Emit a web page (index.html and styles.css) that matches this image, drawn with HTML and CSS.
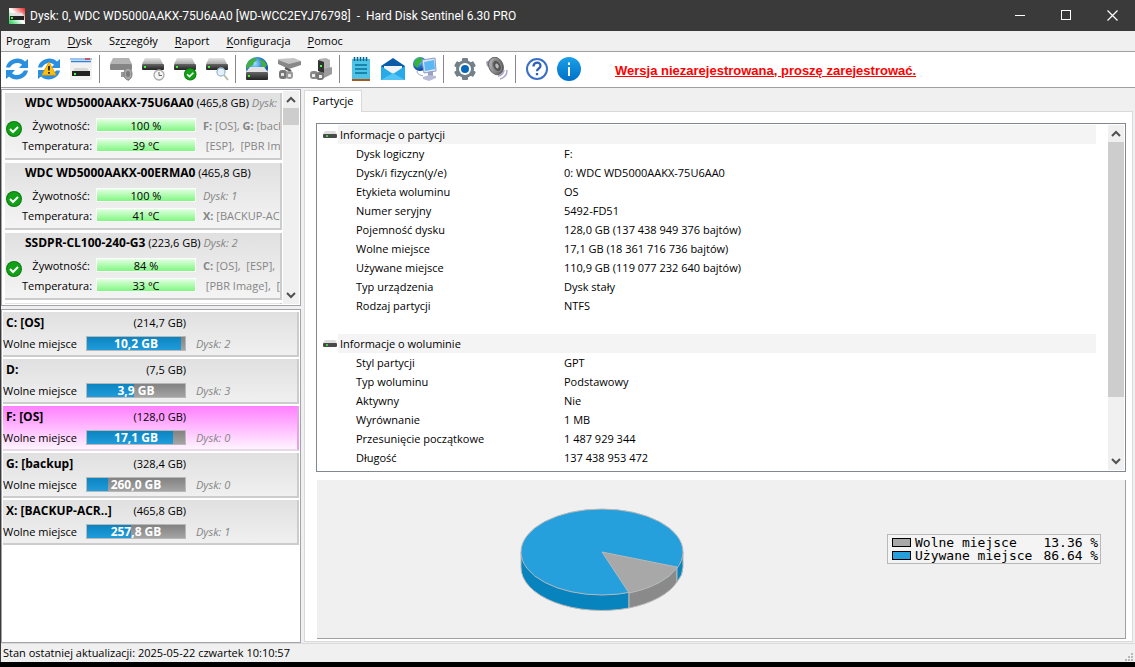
FILE: index.html
```
<!DOCTYPE html>
<html lang="pl">
<head>
<meta charset="utf-8">
<title>Hard Disk Sentinel 6.30 PRO</title>
<link rel="stylesheet" href="styles.css">
</head>
<body>
<svg class="defs" width="0" height="0" aria-hidden="true">
  <defs>
    <linearGradient id="gDrive" x1="0" y1="0" x2="0" y2="1"><stop offset="0" stop-color="#e4e4e4"/><stop offset="1" stop-color="#a8a8a8"/></linearGradient>
    <linearGradient id="gDark" x1="0" y1="0" x2="0" y2="1"><stop offset="0" stop-color="#666"/><stop offset="1" stop-color="#222"/></linearGradient>
    <linearGradient id="gInfo" x1="0" y1="0" x2="0" y2="1"><stop offset="0" stop-color="#1aa0e8"/><stop offset="1" stop-color="#0070c8"/></linearGradient>
    <radialGradient id="gGlobe" cx=".4" cy=".3" r=".7"><stop offset="0" stop-color="#9fe0ff"/><stop offset=".5" stop-color="#2a80d8"/><stop offset="1" stop-color="#0c3c90"/></radialGradient>
    <linearGradient id="gSpk" x1="0" y1="0" x2="1" y2="1"><stop offset="0" stop-color="#c8c8cc"/><stop offset="1" stop-color="#444"/></linearGradient>
    <linearGradient id="gApp" x1="0" y1="1" x2="1" y2="0"><stop offset="0" stop-color="#1fd050"/><stop offset=".5" stop-color="#fff"/><stop offset="1" stop-color="#e82020"/></linearGradient>
    <g id="refresh" fill="#2b8fe0">
      <path d="M1 10.500C2 5 7 1.500 12.500 1.500c3 0 5.500 1 7.500 3L23 2v9h-9l3-3.200c-1.200-1.200-2.800-1.800-4.500-1.800-3.500 0-6.200 1.900-7.500 4.500z"/>
      <path d="M23 13.500C22 19 17 22.500 11.500 22.500c-3 0-5.500-1-7.500-3L1 22v-9h9l-3 3.200c1.200 1.200 2.800 1.800 4.500 1.800 3.500 0 6.200-1.900 7.500-4.500z"/>
    </g>
    <g id="drive">
      <path d="M4 1h15l3 6H1z" fill="url(#gDrive)"/>
      <rect x="1" y="7" width="22" height="6" rx="1" fill="url(#gDark)"/>
      <rect x="3" y="9" width="2" height="2" fill="#3f3"/>
    </g>
    <g id="minidrive">
      <path d="M2 0h10l2 3H0z" fill="#ddd"/><rect y="3" width="14" height="4" rx="1" fill="#4a4a4a"/><rect x="3" y="4" width="2" height="2" fill="#4c4"/>
    </g>
    <g id="ok">
      <circle cx="8" cy="8" r="8" fill="#0a7a0a"/><circle cx="8" cy="8" r="7" fill="#12a018"/>
      <path d="M4 8l3 3 5-5" fill="none" stroke="#fff" stroke-width="2"/>
    </g>
    <g id="chevUp"><path d="M1 6l4-4 4 4" fill="none" stroke="#505050" stroke-width="2"/></g>
    <g id="chevDown"><path d="M1 1l4 4 4-4" fill="none" stroke="#505050" stroke-width="2"/></g>
  </defs>
</svg>

<div class="window">
  <header class="titlebar">
    <svg class="appicon" width="16" height="16" viewBox="0 0 16 16"><rect width="16" height="16" fill="url(#gApp)"/><path d="M2 5h11l2 3H1z" fill="#e0e0e0"/><rect x="1" y="8" width="14" height="4" fill="#222"/><rect x="2" y="9" width="2" height="2" fill="#3f3"/></svg>
    <h1 class="title">Dysk: 0, WDC WD5000AAKX-75U6AA0 [WD-WCC2EYJ76798]&nbsp; -&nbsp; Hard Disk Sentinel 6.30 PRO</h1>
    <div class="winbuttons">
      <button type="button" aria-label="Minimalizuj"><svg width="11" height="11"><path d="M0 5.500h10" stroke="#fff"/></svg></button>
      <button type="button" aria-label="Maksymalizuj"><svg width="11" height="11"><rect x=".5" y=".5" width="9" height="9" fill="none" stroke="#fff"/></svg></button>
      <button type="button" aria-label="Zamknij"><svg width="11" height="11"><path d="M.5.500l10 10M10.500.500l-10 10" stroke="#fff" stroke-width="1.200"/></svg></button>
    </div>
  </header>

  <nav class="menu">
    <button type="button">Pro<u>g</u>ram</button>
    <button type="button"><u>D</u>ysk</button>
    <button type="button">Sz<u>c</u>zegóły</button>
    <button type="button"><u>R</u>aport</button>
    <button type="button"><u>K</u>onfiguracja</button>
    <button type="button"><u>P</u>omoc</button>
  </nav>

  <div class="toolbar">
    <button type="button" aria-label="Odśwież"><svg width="24" height="24"><use href="#refresh"/></svg></button>
    <button type="button" aria-label="Odśwież wszystko"><svg width="24" height="24"><use href="#refresh"/><path d="M12 5l7 13H5z" fill="#fdc010" stroke="#e8a000" stroke-linejoin="round"/><path d="M12 9v4.500M12 15v1.800" stroke="#222" stroke-width="1.800"/></svg></button>
    <button type="button" aria-label="Okno dysku"><svg width="24" height="24"><rect x="1" y="1" width="22" height="22" fill="#f1f1f1"/><path d="M1 2h22" stroke="#7fb4e8" stroke-width="1.500"/><path d="M16 2h5" stroke="#e03030" stroke-width="1.500"/><path d="M2 4.500h20" stroke="#2f86dc" stroke-width="1.500"/><path d="M6 11h12l3 4H3z" fill="#d8d8d8"/><rect x="3" y="14" width="18" height="5" fill="#222"/><rect x="5" y="16" width="2" height="2" fill="#4f4"/></svg></button>
    <span class="sep"></span>
    <button type="button" aria-label="Test dźwięku"><svg width="24" height="24"><path d="M4 1h16l3 6H1z" fill="#b4b4b4"/><rect x="1" y="7" width="22" height="6" rx="1" fill="#858585"/><path d="M12 15h3l5-4v13l-5-4h-3z" fill="#9a9a9a"/><ellipse cx="19" cy="17" rx="4" ry="6" fill="#a6a6a6" stroke="#808080"/><ellipse cx="19" cy="17" rx="2" ry="3" fill="#7b7b7b"/></svg></button>
    <button type="button" aria-label="Harmonogram"><svg width="24" height="24"><use href="#drive"/><circle cx="18" cy="18" r="5" fill="#f4f4f4" stroke="#aaa" stroke-width="1.300"/><path d="M18 15v3.500h3" fill="none" stroke="#666"/></svg></button>
    <button type="button" aria-label="Test dysku"><svg width="24" height="24"><use href="#drive"/><use href="#ok" transform="translate(11 11) scale(.78)"/></svg></button>
    <button type="button" aria-label="Przeszukaj dysk"><svg width="24" height="24"><use href="#drive"/><circle cx="16" cy="15" r="4" fill="#e2f2fd" stroke="#9ab8d0" stroke-width="1.300"/><path d="M19 18l4 5" stroke="#bba" stroke-width="2"/></svg></button>
    <span class="sep"></span>
    <button type="button" aria-label="Dysk sieciowy"><svg width="24" height="24"><circle cx="12" cy="11" r="11" fill="url(#gGlobe)"/><path d="M3 5C5 2 8 1 11 1l1 2-3 2-1 3-4 2-2 2-1-3zM14 2l5 2 3 4-2 3-3-1-1-4z" fill="#42b040"/><path d="M5 10h14l4 5H1z" fill="#e2e2e2"/><rect x="1" y="15" width="22" height="8" rx="1" fill="url(#gDark)"/><rect x="3" y="18" width="2" height="2" fill="#3f3"/></svg></button>
    <button type="button" aria-label="Klucz sprzętowy"><svg width="24" height="24"><path d="M1 2l16-1 7 3-12 5-11-3z" fill="#c4c4c4"/><path d="M1 3l11 4 12-3v4l-12 4-11-5z" fill="#888"/><path d="M8 11l6 3" stroke="#555" stroke-width="2"/><rect x="2" y="13" width="8" height="9" rx="3" fill="#777"/><rect x="9" y="14" width="7" height="8" rx="3" fill="#999"/><path d="M4 16h3v3H4zM11 17h3v3h-3z" fill="#e6e6e6"/></svg></button>
    <button type="button" aria-label="Stacja dysków"><svg width="24" height="24"><path d="M10 2l7-1 4 2v13l-5 3-6-3z" fill="#b2b2b2"/><path d="M9 3l6 2v11l-6-2z" fill="#333"/><rect x="11" y="8" width="2" height="2" fill="#4f4"/><path d="M15 12l8-2v7l-8 4z" fill="#9b9b9b"/><rect x="1" y="14" width="8" height="8" rx="3" fill="#888"/><rect x="7" y="15" width="8" height="8" rx="3" fill="#777"/><path d="M3 17h3v3H3zM10 18h3v3h-3z" fill="#eee"/></svg></button>
    <span class="sep"></span>
    <button type="button" aria-label="Raport"><svg width="24" height="24"><rect x="3" y="2" width="18" height="20" fill="#4dc3e8"/><rect x="3" y="22" width="18" height="2" fill="#b05418"/><path d="M6 8h12M6 12h12M6 16h12" stroke="#087098" stroke-width="1.500"/><path d="M5.500 0v4M8.500 0v4M11.500 0v4M14.500 0v4M17.500 0v4" stroke="#08658c" stroke-width="1.600"/></svg></button>
    <button type="button" aria-label="Wyślij raport"><svg width="24" height="24"><path d="M0 9l12-8 12 8v2H0z" fill="#0a5ba8"/><path d="M3 9h18v7l-9 4-9-4z" fill="#f0f4f8"/><path d="M0 9l12 8 12-8v14H0z" fill="#29aae8"/><path d="M0 23l12-7 12 7z" fill="#50c4f4"/></svg></button>
    <button type="button" aria-label="Sieć"><svg width="24" height="24"><circle cx="7" cy="7" r="7" fill="url(#gGlobe)"/><path d="M2 3l5-3 3 3-4 4-1 4-4-3z" fill="#36b534"/><path d="M9 3l13-2 1 13-12 2z" fill="#dde6f4" stroke="#8a9cc8"/><path d="M11 5l10-2 1 9-10 2z" fill="#5bb8f4"/><path d="M15 15l5-1v5l-5 1z" fill="#9aa0c0"/><path d="M10 20l6-2 7 1v2l-7 3-6-2z" fill="#b8bcd6"/><path d="M4 14c0 3 3 4 6 5" fill="none" stroke="#9aa0c8"/></svg></button>
    <span class="sep"></span>
    <button type="button" aria-label="Ustawienia"><svg width="24" height="24"><g fill="#73808a"><rect x="9" y="1" width="6" height="22" rx="1"/><rect x="9" y="1" width="6" height="22" rx="1" transform="rotate(60 12 12)"/><rect x="9" y="1" width="6" height="22" rx="1" transform="rotate(120 12 12)"/><circle cx="12" cy="12" r="9"/></g><circle cx="12" cy="12" r="6" fill="#fff"/><circle cx="12" cy="12" r="4" fill="#0868b8"/></svg></button>
    <button type="button" aria-label="Dźwięk"><svg width="24" height="24"><path d="M1 5l7-4 8 15-7-2-7-5z" fill="#9c9aaa"/><ellipse cx="11" cy="9" rx="7" ry="9" fill="url(#gSpk)" stroke="#666" transform="rotate(-25 11 9)"/><ellipse cx="12" cy="9" rx="4" ry="6" fill="#555" stroke="#888" transform="rotate(-25 12 9)"/><ellipse cx="12" cy="9" rx="1.500" ry="2.500" fill="#bbb" transform="rotate(-25 12 9)"/><path d="M13 19c3 0 6-3 6-6M15 22c4-1 7-4 7-9" fill="none" stroke="#a9a6c9" stroke-width="1.500"/></svg></button>
    <span class="sep"></span>
    <button type="button" aria-label="Pomoc"><svg width="24" height="24"><circle cx="12" cy="12" r="10" fill="#fff" stroke="#3a6fc8" stroke-width="2"/><path d="M8.500 9.500c0-5 7-5 7-.8 0 2.800-3.500 2.800-3.500 5.600M12 16v2.300" fill="none" stroke="#3060b8" stroke-width="2.300"/></svg></button>
    <button type="button" aria-label="Informacje"><svg width="24" height="24"><circle cx="12" cy="12" r="12" fill="url(#gInfo)"/><path d="M12 10v9M12 5.500v2.500" stroke="#fff" stroke-width="2"/></svg></button>
    <a class="unreg" href="#">Wersja niezarejestrowana, proszę zarejestrować.</a>
  </div>

  <main class="main">
    <aside class="side">
      <section class="box disks">
        <ul class="disklist">
          <li class="disk">
            <svg class="state" width="16" height="16"><use href="#ok"/></svg>
            <div class="dname"><b>WDC WD5000AAKX-75U6AA0</b> (465,8 GB) <i>Dysk: 0</i></div>
            <span class="lbl">Żywotność:</span><span class="meter">100 %</span><span class="vols"><b>F:</b> [OS], <b>G:</b> [backup]</span>
            <span class="lbl">Temperatura:</span><span class="meter">39 °C</span><span class="vols">&nbsp;[ESP],&nbsp; [PBR Image]</span>
          </li>
          <li class="disk">
            <svg class="state" width="16" height="16"><use href="#ok"/></svg>
            <div class="dname"><b>WDC WD5000AAKX-00ERMA0</b> (465,8 GB)</div>
            <span class="lbl">Żywotność:</span><span class="meter">100 %</span><span class="vols"><i>Dysk: 1</i></span>
            <span class="lbl">Temperatura:</span><span class="meter">41 °C</span><span class="vols"><b>X:</b> [BACKUP-ACR]</span>
          </li>
          <li class="disk">
            <svg class="state" width="16" height="16"><use href="#ok"/></svg>
            <div class="dname"><b>SSDPR-CL100-240-G3</b> (223,6 GB) <i>Dysk: 2</i></div>
            <span class="lbl">Żywotność:</span><span class="meter">84 %</span><span class="vols"><b>C:</b> [OS],&nbsp; [ESP],</span>
            <span class="lbl">Temperatura:</span><span class="meter">33 °C</span><span class="vols">&nbsp;[PBR Image],&nbsp; [</span>
          </li>
          <li class="disk"></li>
        </ul>
        <div class="scroll">
          <svg width="10" height="7"><use href="#chevUp"/></svg>
          <span class="track"><span class="thumb small"></span></span>
          <svg width="10" height="7"><use href="#chevDown"/></svg>
        </div>
      </section>
      <section class="box parts">
        <ul class="partlist">
          <li class="part"><b>C: [OS]</b><span class="size">(214,7 GB)</span><span class="free">Wolne miejsce</span><span class="usage"><span class="fill" style="width:96%"></span><b>10,2 GB</b></span><i>Dysk: 2</i></li>
          <li class="part"><b>D:</b><span class="size">(7,5 GB)</span><span class="free">Wolne miejsce</span><span class="usage"><span class="fill" style="width:48%"></span><b>3,9 GB</b></span><i>Dysk: 3</i></li>
          <li class="part selected"><b>F: [OS]</b><span class="size">(128,0 GB)</span><span class="free">Wolne miejsce</span><span class="usage"><span class="fill" style="width:88%"></span><b>17,1 GB</b></span><i>Dysk: 0</i></li>
          <li class="part"><b>G: [backup]</b><span class="size">(328,4 GB)</span><span class="free">Wolne miejsce</span><span class="usage"><span class="fill" style="width:21%"></span><b>260,0 GB</b></span><i>Dysk: 0</i></li>
          <li class="part"><b>X: [BACKUP-ACR..]</b><span class="size">(465,8 GB)</span><span class="free">Wolne miejsce</span><span class="usage"><span class="fill" style="width:45%"></span><b>257,8 GB</b></span><i>Dysk: 1</i></li>
        </ul>
      </section>
    </aside>

    <section class="detail">
      <div class="tabs"><button type="button" class="tab">Partycje</button><span class="tabline"></span></div>
      <div class="page">
        <div class="infobox">
          <div class="infoscroll">
          <table class="info">
            <colgroup><col class="c1"><col></colgroup>
            <tbody>
            <tr><th colspan="2"><span><svg width="14" height="8"><use href="#minidrive"/></svg><em>Informacje o partycji</em></span></th></tr>
            <tr><td>Dysk logiczny</td><td>F:</td></tr>
            <tr><td>Dysk/i fizyczn(y/e)</td><td>0: WDC WD5000AAKX-75U6AA0</td></tr>
            <tr><td>Etykieta woluminu</td><td>OS</td></tr>
            <tr><td>Numer seryjny</td><td>5492-FD51</td></tr>
            <tr><td>Pojemność dysku</td><td>128,0 GB (137 438 949 376 bajtów)</td></tr>
            <tr><td>Wolne miejsce</td><td>17,1 GB (18 361 716 736 bajtów)</td></tr>
            <tr><td>Używane miejsce</td><td>110,9 GB (119 077 232 640 bajtów)</td></tr>
            <tr><td>Typ urządzenia</td><td>Dysk stały</td></tr>
            <tr><td>Rodzaj partycji</td><td>NTFS</td></tr>
            <tr><td></td><td></td></tr>
            <tr><th colspan="2"><span><svg width="14" height="8"><use href="#minidrive"/></svg><em>Informacje o woluminie</em></span></th></tr>
            <tr><td>Styl partycji</td><td>GPT</td></tr>
            <tr><td>Typ woluminu</td><td>Podstawowy</td></tr>
            <tr><td>Aktywny</td><td>Nie</td></tr>
            <tr><td>Wyrównanie</td><td>1 MB</td></tr>
            <tr><td>Przesunięcie początkowe</td><td>1 487 929 344</td></tr>
            <tr><td>Długość</td><td>137 438 953 472</td></tr>
            </tbody>
          </table>
          </div>
          <div class="scroll">
            <svg width="10" height="7"><use href="#chevUp"/></svg>
            <span class="track"><span class="thumb large"></span></span>
            <svg width="10" height="7"><use href="#chevDown"/></svg>
          </div>
        </div>
        <div class="chart">
          <svg class="pie" width="166" height="104" viewBox="0 0 166 104" role="img" aria-label="Wolne miejsce 13.36 %, używane miejsce 86.64 %">
            <path d="M2 45v15a81 43 0 0 0 108 41V60z" fill="#0783be" stroke="#b8b8b8"/>
            <path d="M110 86v15a81 43 0 0 0 48-26V60z" fill="#8a8a8a" stroke="#b8b8b8"/>
            <path d="M158 60v15q6-7 6-15V45z" fill="#0783be" stroke="#b8b8b8"/>
            <ellipse cx="83" cy="45" rx="81" ry="43" fill="#26a0dc" stroke="#b8b8b8"/>
            <path d="M83 45l75 15a81 43 0 0 1-48 26z" fill="#a8a8a8" stroke="#b8b8b8"/>
          </svg>
          <dl class="legend">
            <dt><span class="key grey"></span>Wolne miejsce</dt><dd>13.36 %</dd>
            <dt><span class="key blue"></span>Używane miejsce</dt><dd>86.64 %</dd>
          </dl>
        </div>
      </div>
    </section>
  </main>

  <footer class="status">
    <span>Stan ostatniej aktualizacji: 2025-05-22 czwartek 10:10:57</span>
    <svg width="8" height="8" fill="#b8b8b8"><path d="M6 0h2v2H6zM3 3h2v2H3zM6 3h2v2H6zM0 6h2v2H0zM3 6h2v2H3zM6 6h2v2H6z"/></svg>
  </footer>
</div>
</body>
</html>
```
FILE: styles.css
```
* { box-sizing: border-box; }
body {
  margin: 0;
  background: #000;
  color: #000;
  font: 11px/19px "Open Sans", "Noto Sans", sans-serif;
  white-space: nowrap;
}
button { margin: 0; padding: 0; border: 0; background: none; font: inherit; color: inherit; }
ul, dl, dd, h1 { margin: 0; padding: 0; list-style: none; }
svg { display: block; flex: none; }
.defs { position: absolute; }

.window {
  display: flex;
  flex-direction: column;
  height: calc(100vh - 5px);
  border-left: 1px solid #3a3a3a;
  background: #f0f0f0;
}

.titlebar { display: flex; align-items: center; flex: none; height: 31px; padding-left: 8px; background: #3a3a3a; color: #fff; }
.title { flex: 1; margin-left: 5px; font: 12px/20px Roboto, "Open Sans", sans-serif; }
.winbuttons { display: flex; }
.winbuttons button { display: grid; place-items: center; width: 46px; height: 31px; }

.menu { display: flex; align-items: flex-start; flex: none; gap: 17px; height: 21px; padding-left: 5px; border-bottom: 1px solid #a0a0a0; }
.menu u { text-underline-offset: 2px; }

.toolbar { display: flex; align-items: center; flex: none; height: 36px; padding-bottom: 2px; background: #fff; border-bottom: 1px solid #a0a0a0; }
.toolbar button { display: grid; place-items: center; width: 32px; height: 32px; }
.sep { width: 6px; height: 28px; margin-left: 2px; border-left: 1px solid #888; }
.unreg { margin-left: 30px; padding-top: 4px; color: #f00; font: bold 13px/20px "Liberation Sans", Arial, sans-serif; }

.main { display: flex; flex: 1; min-height: 0; padding-top: 1px; }
.side { display: flex; flex-direction: column; gap: 3px; flex: none; width: 300px; }
.box { background: #fff; border: 1px solid #a3a3ab; }
.disks { display: flex; flex: none; height: 217px; padding: 1px; }
.parts { flex: 1; padding: 2px 1px; }

.disklist { flex: 1; overflow: hidden; padding: 2px 1px 0 2px; }
.disk {
  display: grid;
  grid-template-columns: 17px 68px 102px 1fr;
  grid-template-rows: 18px 28px 12px;
  align-items: center;
  height: 67px;
  margin-bottom: 3px;
  overflow: hidden;
  background: linear-gradient(#e0e0e0, #f4f4f4);
  border-right: 2px solid #ccc;
  border-bottom: 2px solid #ccc;
}
.disk:last-child { height: 2px; border-bottom: 0; }
.state { grid-column: 1; grid-row: 2 / 4; align-self: start; margin-top: 10px; margin-left: 1px; }
.dname { grid-column: 1 / -1; grid-row: 1; padding-left: 20px; }
.dname b, .part b { font-size: 12px; }
.dname i, .vols { color: #858585; }
.lbl { grid-column: 2; text-align: right; }
.meter {
  height: 14px;
  margin-left: 6px;
  margin-right: -4px;
  border: 1px solid #fff;
  background: linear-gradient(#e4ffe4, #80f780);
  text-align: center;
  line-height: 14px;
}
.vols { padding-left: 11px; }

.scroll { display: flex; flex-direction: column; align-items: center; flex: none; width: 16px; padding: 5px 0; background: #f0f0f0; }
.track { flex: 1; align-self: stretch; padding: 5px 0; }
.thumb { display: block; background: #cdcdcd; }
.small { height: 17px; }
.large { height: 82%; }

.part {
  display: grid;
  grid-template-columns: 83px 100px 1fr;
  grid-template-rows: 20px 23px;
  align-items: center;
  height: 45px;
  margin-bottom: 2px;
  background: linear-gradient(#e0e0e0, #f0f0f0);
  border-right: 2px solid #ccc;
  border-bottom: 2px solid #ccc;
}
.part > b { grid-column: 1 / 3; grid-row: 1; padding-left: 3px; }
.size { grid-column: 1 / 3; grid-row: 1; text-align: right; }
.free { grid-column: 1; grid-row: 2; }
.usage { grid-column: 2; grid-row: 2; position: relative; height: 15px; border: 1px solid #b8b8b8; background: linear-gradient(#828282, #a4a4a4); color: #fff; text-align: center; line-height: 13px; }
.usage b { position: relative; }
.fill { position: absolute; left: 0; top: 0; bottom: 0; background: linear-gradient(#0c84c0, #209cdc); }
.part i { grid-column: 3; grid-row: 2; padding-left: 10px; color: #858585; }
.selected { background: linear-gradient(#ff80ff, #fff4ff); border-right-color: #e8a0e8; border-bottom-color: #e8d8e8; }

.detail { display: flex; flex-direction: column; flex: 1; min-width: 0; padding: 1px 2px 1px 3px; }
.tabs { display: flex; flex: none; height: 22px; }
.tab { width: 58px; padding-bottom: 4px; background: #fff; border: 1px solid #d9d9d9; border-bottom: 0; }
.tabline { flex: 1; border-bottom: 1px solid #d9d9d9; }
.page { display: flex; flex-direction: column; gap: 8px; flex: 1; min-height: 0; padding: 11px 6px 2px 11px; background: #fff; border: 1px solid #d9d9d9; border-top: 0; }
.infobox { display: flex; flex: none; height: 349px; padding: 1px; border: 1px solid #828790; }
.infoscroll { flex: 1; min-width: 0; padding: 0 12px 0 5px; }
.info { width: 100%; border-collapse: collapse; table-layout: fixed; }
.c1 { width: 241px; }
.info tr { height: 19px; }
.info td, .info th { padding: 0; text-align: left; font-weight: 400; }
.info td:first-child { padding-left: 33px; }
.info th > span { display: flex; align-items: center; gap: 1px; }
.info em { flex: 1; padding-left: 2px; background: #f4f4f4; font-style: normal; }

.chart { display: grid; grid-template-columns: 570px 1fr; align-items: center; flex: 1; min-height: 0; margin-left: 1px; border-right: 1px solid #a0a0a0; border-bottom: 1px solid #a0a0a0; background: #f0f0f0; }
.pie { justify-self: center; }
.legend {
  display: grid;
  grid-template-columns: auto auto;
  column-gap: 11px;
  justify-self: end;
  margin-right: 25px;
  margin-bottom: 20px;
  padding: 1px 2px;
  border: 1px solid #b8b8b8;
  background: #f4f4f4;
  font: 13px/13px "DejaVu Sans Mono", monospace;
}
.legend dt { display: flex; align-items: center; }
.key { width: 19px; height: 9px; margin: 0 4px 0 2px; border: 1px solid #000; }
.grey { background: #a8a8a8; }
.blue { background: #26a0dc; }

.status { display: flex; justify-content: space-between; align-items: end; flex: none; height: 19px; padding: 0 2px; border-top: 1px solid #d9d9d9; }
.status svg { margin-bottom: 1px; }
```
